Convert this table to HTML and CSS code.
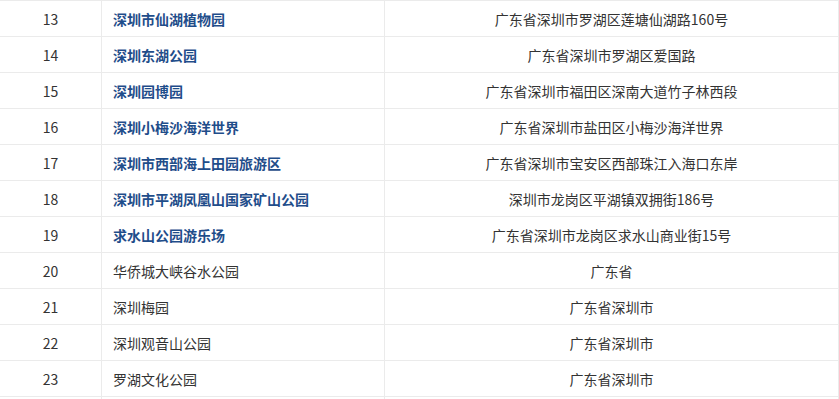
FILE: index.html
```html
<!DOCTYPE html>
<html lang="zh-CN">
<head>
<meta charset="utf-8">
<title>深圳景点</title>
<link rel="stylesheet" href="styles.css">
</head>
<body>
<div class="table">
  <div class="row"><div class="cell num">13</div><div class="cell name"><a class="link" href="#">深圳市仙湖植物园</a></div><div class="cell addr">广东省深圳市罗湖区莲塘仙湖路160号</div></div>
  <div class="row"><div class="cell num">14</div><div class="cell name"><a class="link" href="#">深圳东湖公园</a></div><div class="cell addr">广东省深圳市罗湖区爱国路</div></div>
  <div class="row"><div class="cell num">15</div><div class="cell name"><a class="link" href="#">深圳园博园</a></div><div class="cell addr">广东省深圳市福田区深南大道竹子林西段</div></div>
  <div class="row"><div class="cell num">16</div><div class="cell name"><a class="link" href="#">深圳小梅沙海洋世界</a></div><div class="cell addr">广东省深圳市盐田区小梅沙海洋世界</div></div>
  <div class="row"><div class="cell num">17</div><div class="cell name"><a class="link" href="#">深圳市西部海上田园旅游区</a></div><div class="cell addr">广东省深圳市宝安区西部珠江入海口东岸</div></div>
  <div class="row"><div class="cell num">18</div><div class="cell name"><a class="link" href="#">深圳市平湖凤凰山国家矿山公园</a></div><div class="cell addr">深圳市龙岗区平湖镇双拥街186号</div></div>
  <div class="row"><div class="cell num">19</div><div class="cell name"><a class="link" href="#">求水山公园游乐场</a></div><div class="cell addr">广东省深圳市龙岗区求水山商业街15号</div></div>
  <div class="row"><div class="cell num">20</div><div class="cell name">华侨城大峡谷水公园</div><div class="cell addr">广东省</div></div>
  <div class="row"><div class="cell num">21</div><div class="cell name">深圳梅园</div><div class="cell addr">广东省深圳市</div></div>
  <div class="row"><div class="cell num">22</div><div class="cell name">深圳观音山公园</div><div class="cell addr">广东省深圳市</div></div>
  <div class="row"><div class="cell num">23</div><div class="cell name">罗湖文化公园</div><div class="cell addr">广东省深圳市</div></div>
  <div class="row row-partial"><div class="cell num"></div><div class="cell name"></div><div class="cell addr"></div></div>
</div>
</body>
</html>
```
FILE: styles.css
```css
html, body {
  margin: 0;
  padding: 0;
  background: #ffffff;
}
body {
  font-family: "Noto Sans CJK SC", "Noto Sans", sans-serif;
  font-size: 14px;
  color: #333333;
  height: 399px;
  overflow: hidden;
}
.table {
  width: 839px;
  height: 399px;
  overflow: hidden;
  border-top: 1px solid #ebebeb;
  box-sizing: border-box;
}
.row {
  display: grid;
  grid-template-columns: 102px 283px 454px;
  height: 36px;
  box-sizing: border-box;
  border-bottom: 1px solid #ebebeb;
}
.row-partial {
  height: 2px;
  border-bottom: 0;
}
.cell {
  display: flex;
  align-items: center;
  border-right: 1px solid #ebebeb;
  line-height: 20px;
  white-space: nowrap;
}
.num {
  justify-content: center;
}
.name {
  padding-left: 11px;
}
.addr {
  justify-content: center;
}
.link {
  color: #1f4d8a;
  font-weight: bold;
  text-decoration: none;
}
```
